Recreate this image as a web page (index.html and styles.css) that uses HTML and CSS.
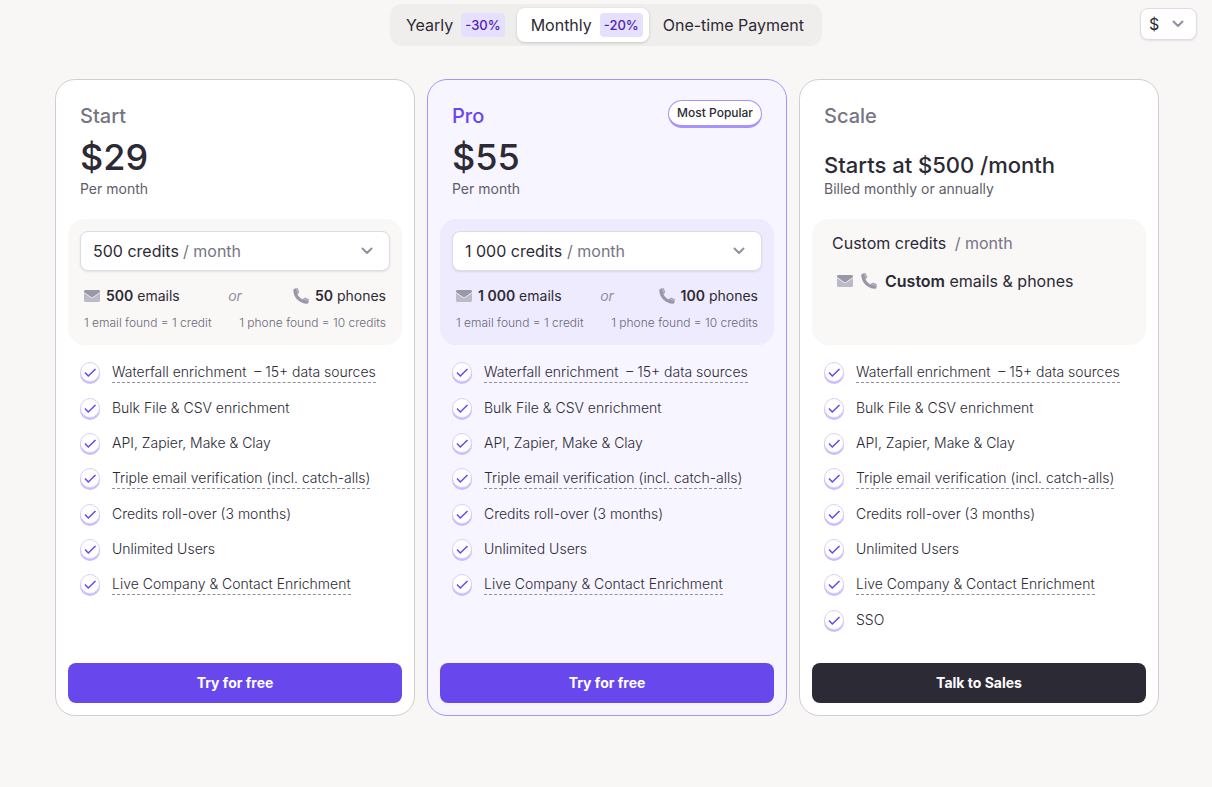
FILE: index.html
```html
<!DOCTYPE html>
<html lang="en">
<head>
<meta charset="utf-8">
<meta name="viewport" content="width=device-width, initial-scale=1">
<title>Pricing</title>
<link rel="stylesheet" href="styles.css">
</head>
<body>
<svg class="sprite" aria-hidden="true">
  <symbol id="chevron" viewBox="0 0 12 8"><path d="M1.500 1.500 6 6l4.500-4.500" fill="none" stroke="currentColor" stroke-width="2" stroke-linecap="round" stroke-linejoin="round"/></symbol>
  <symbol id="mail" viewBox="0 0 16 12"><rect width="16" height="12" rx="1.500" fill="#bcbac6"/><path d="M0 2.200V1.500Q0 0 1.500 0h13Q16 0 16 1.500v.7L8.800 7.200a1.500 1.500 0 0 1-1.600 0Z" fill="#9a98a8"/><path d="m0 2.600 7.200 5a1.500 1.500 0 0 0 1.600 0l7.200-5" fill="none" stroke="#f3f2f5" stroke-width=".9"/></symbol>
  <symbol id="phone" viewBox="0 0 16 16"><path d="M.3 2.200C.2 1.400.8.900 1.500.7L3.700.1c.6-.1 1 .1 1.200.6l1.200 3c.2.500.1.900-.3 1.200L4.400 6.100c1 2.300 2.900 4.300 5.400 5.400l1.200-1.400c.3-.4.8-.5 1.200-.3l3.100 1.300c.5.200.7.600.6 1.100l-.5 2.200c-.2.800-.7 1.300-1.500 1.300C6.600 15.500.5 9.500.3 2.200Z" fill="#9a98a8"/><path d="m3.400.2 2 5.200M10.500 10.600l5.200 2.200" fill="none" stroke="#c9c7d0" stroke-width=".9"/></symbol>
  <symbol id="check" viewBox="0 0 20 23"><circle cx="10" cy="13" r="10" fill="#c9bdfc"/><circle cx="10" cy="11" r="9.500" fill="#fff" stroke="#d9d0fd"/><path d="m5 11.500 3.300 3.500L15.500 8" fill="none" stroke="#6847ed" stroke-width="1.500"/></symbol>
</svg>

<header class="toolbar">
  <div class="tabs" role="group" aria-label="Billing period">
    <button class="tab" type="button">Yearly <span class="discount">-30%</span></button>
    <button class="tab tab-active" type="button" aria-pressed="true">Monthly <span class="discount">-20%</span></button>
    <button class="tab tab-wide" type="button">One-time Payment</button>
  </div>
  <div class="currency">
    <select aria-label="Currency"><option>$</option></select>
    <svg class="chevron"><use href="#chevron"/></svg>
  </div>
</header>

<main class="plans">
  <section class="card">
    <div class="head">
      <h2 class="name">Start</h2>
      <p class="price">$29</p>
      <p class="period">Per month</p>
    </div>
    <div class="credits">
      <div class="picker">
        <select aria-label="Start credits per month"><option>500 credits</option></select>
        <span class="per">/ month</span>
        <svg class="chevron"><use href="#chevron"/></svg>
      </div>
      <div class="amounts">
        <span class="amount"><svg class="mail"><use href="#mail"/></svg><span><b>500</b> emails</span></span>
        <em class="or">or</em>
        <span class="amount amount-end"><svg class="phone"><use href="#phone"/></svg><span><b>50</b> phones</span></span>
      </div>
      <div class="notes"><span>1 email found = 1 credit</span><span>1 phone found = 10 credits</span></div>
    </div>
    <ul class="features">
      <li><svg class="check"><use href="#check"/></svg><span class="hint">Waterfall enrichment&nbsp; – 15+ data sources</span></li>
      <li><svg class="check"><use href="#check"/></svg><span>Bulk File &amp; CSV enrichment</span></li>
      <li><svg class="check"><use href="#check"/></svg><span>API, Zapier, Make &amp; Clay</span></li>
      <li><svg class="check"><use href="#check"/></svg><span class="hint">Triple email verification (incl. catch-alls)</span></li>
      <li><svg class="check"><use href="#check"/></svg><span>Credits roll-over (3 months)</span></li>
      <li><svg class="check"><use href="#check"/></svg><span>Unlimited Users</span></li>
      <li><svg class="check"><use href="#check"/></svg><span class="hint">Live Company &amp; Contact Enrichment</span></li>
    </ul>
    <button class="cta" type="button">Try for free</button>
  </section>

  <section class="card card-pro">
    <div class="head">
      <div class="title-row"><h2 class="name">Pro</h2><span class="badge">Most Popular</span></div>
      <p class="price">$55</p>
      <p class="period">Per month</p>
    </div>
    <div class="credits">
      <div class="picker">
        <select aria-label="Pro credits per month"><option>1 000 credits</option></select>
        <span class="per">/ month</span>
        <svg class="chevron"><use href="#chevron"/></svg>
      </div>
      <div class="amounts">
        <span class="amount"><svg class="mail"><use href="#mail"/></svg><span><b>1 000</b> emails</span></span>
        <em class="or">or</em>
        <span class="amount amount-end"><svg class="phone"><use href="#phone"/></svg><span><b>100</b> phones</span></span>
      </div>
      <div class="notes"><span>1 email found = 1 credit</span><span>1 phone found = 10 credits</span></div>
    </div>
    <ul class="features">
      <li><svg class="check"><use href="#check"/></svg><span class="hint">Waterfall enrichment&nbsp; – 15+ data sources</span></li>
      <li><svg class="check"><use href="#check"/></svg><span>Bulk File &amp; CSV enrichment</span></li>
      <li><svg class="check"><use href="#check"/></svg><span>API, Zapier, Make &amp; Clay</span></li>
      <li><svg class="check"><use href="#check"/></svg><span class="hint">Triple email verification (incl. catch-alls)</span></li>
      <li><svg class="check"><use href="#check"/></svg><span>Credits roll-over (3 months)</span></li>
      <li><svg class="check"><use href="#check"/></svg><span>Unlimited Users</span></li>
      <li><svg class="check"><use href="#check"/></svg><span class="hint">Live Company &amp; Contact Enrichment</span></li>
    </ul>
    <button class="cta" type="button">Try for free</button>
  </section>

  <section class="card">
    <div class="head">
      <h2 class="name">Scale</h2>
      <p class="price price-custom">Starts at $500 /month</p>
      <p class="period">Billed monthly or annually</p>
    </div>
    <div class="credits credits-custom">
      <p class="custom-line">Custom credits <span class="per">/ month</span></p>
      <p class="custom-contacts"><svg class="mail"><use href="#mail"/></svg><svg class="phone"><use href="#phone"/></svg><span><b>Custom</b> emails &amp; phones</span></p>
    </div>
    <ul class="features">
      <li><svg class="check"><use href="#check"/></svg><span class="hint">Waterfall enrichment&nbsp; – 15+ data sources</span></li>
      <li><svg class="check"><use href="#check"/></svg><span>Bulk File &amp; CSV enrichment</span></li>
      <li><svg class="check"><use href="#check"/></svg><span>API, Zapier, Make &amp; Clay</span></li>
      <li><svg class="check"><use href="#check"/></svg><span class="hint">Triple email verification (incl. catch-alls)</span></li>
      <li><svg class="check"><use href="#check"/></svg><span>Credits roll-over (3 months)</span></li>
      <li><svg class="check"><use href="#check"/></svg><span>Unlimited Users</span></li>
      <li><svg class="check"><use href="#check"/></svg><span class="hint">Live Company &amp; Contact Enrichment</span></li>
      <li><svg class="check"><use href="#check"/></svg><span>SSO</span></li>
    </ul>
    <button class="cta cta-dark" type="button">Talk to Sales</button>
  </section>
</main>
</body>
</html>
```
FILE: styles.css
```css
* { box-sizing: border-box; }

body {
  margin: 0;
  background: #f8f7f5;
  color: #2c2a35;
  font-family: Inter, "Noto Sans", sans-serif;
  font-size: 14px;
  line-height: 20px;
}

h2, p, ul { margin: 0; padding: 0; }
button, select { font: inherit; color: inherit; border: 0; background: none; }
svg { display: block; flex: none; }
b { font-weight: 600; }

.sprite { position: absolute; width: 0; height: 0; }
.chevron { width: 12px; height: 8px; color: #92909f; pointer-events: none; }
.mail { width: 16px; height: 12px; }
.phone { width: 16px; height: 16px; }
.check { width: 20px; height: 23px; }

.toolbar {
  display: grid;
  grid-template-columns: 1fr auto 1fr;
  align-items: start;
  padding: 4px 15px 0;
}
.tabs {
  grid-column: 2;
  display: flex;
  padding: 4px;
  border-radius: 12px;
  background: #efeeec;
}
.tab {
  display: flex;
  align-items: center;
  gap: 8px;
  height: 34px;
  padding: 0 12px;
  border-radius: 8px;
  font-size: 16px;
}
.tab-active {
  padding: 0 6px 0 14px;
  background: #fff;
  box-shadow: 0 1px 3px rgba(44, 42, 53, .2);
}
.tab-wide { padding: 0 14px; }
.discount {
  padding: 2px 4px;
  border-radius: 4px;
  background: #e6e0ff;
  color: #4f22b8;
  font-size: 13px;
  font-weight: 500;
}
.currency {
  justify-self: end;
  display: grid;
  align-items: center;
  width: 57px;
  height: 32px;
  margin-top: 4px;
  border: 1px solid #dddce4;
  border-radius: 8px;
  background: #fff;
  box-shadow: 0 1px 2px rgba(44, 42, 53, .1);
}
.currency select {
  grid-area: 1 / 1;
  height: 30px;
  padding: 0 8px;
  appearance: none;
  font-size: 16px;
}
.currency .chevron { grid-area: 1 / 1; justify-self: end; margin-right: 12px; }

.plans {
  display: grid;
  grid-template-columns: repeat(3, 1fr);
  gap: 12px;
  max-width: 1212px;
  margin: 33px auto 0;
  padding: 0 53px 71px 55px;
}
.card {
  display: flex;
  flex-direction: column;
  padding: 20px 12px 12px;
  border: 1px solid #cfced2;
  border-radius: 20px;
  background: #fff;
}
.card-pro { border-color: #a793fb; background: #f7f5ff; }

.head { padding: 0 12px; }
.title-row { display: flex; justify-content: space-between; align-items: start; }
.name {
  padding-top: 2px;
  color: #777583;
  font-size: 20px;
  font-weight: 500;
  line-height: 28px;
}
.card-pro .name { color: #6847ed; }
.badge {
  padding: 2px 8px;
  border: 1px solid #a793fb;
  border-bottom-width: 3px;
  border-radius: 14px;
  background: #fff;
  font-size: 12px;
  font-weight: 500;
}
.price {
  padding-top: 5px;
  font-size: 36px;
  font-weight: 500;
  line-height: 44px;
}
.price-custom { padding-top: 21px; font-size: 22px; line-height: 28px; }
.period { color: #5f5d68; }

.credits {
  display: flex;
  flex-direction: column;
  min-height: 126px;
  margin-top: 20px;
  padding: 12px;
  border-radius: 16px;
  background: #f9f8f7;
}
.card-pro .credits { background: #eeebff; }
.picker {
  display: flex;
  align-items: center;
  gap: 4px;
  height: 40px;
  padding: 0 16px 0 12px;
  border: 1px solid #dddce4;
  border-radius: 8px;
  background: #fff;
  box-shadow: 0 1px 2px rgba(44, 42, 53, .1);
  font-size: 16px;
}
.picker select { height: 38px; padding: 0; appearance: none; }
.picker .chevron { margin-left: auto; }
.per { color: #777583; }
.amounts {
  display: grid;
  grid-template-columns: 1fr auto 1fr;
  align-items: center;
  margin-top: 15px;
  padding: 0 4px;
}
.amount { display: flex; align-items: center; gap: 6px; }
.amount-end { justify-content: end; }
.or { color: #92909f; }
.notes {
  display: flex;
  justify-content: space-between;
  margin-top: 7px;
  padding: 0 4px;
  color: #6b6977;
  font-size: 12px;
  font-weight: 300;
}
.credits-custom { gap: 16px; padding: 13px 20px; font-size: 16px; }
.custom-line { line-height: 22px; }
.custom-line .per { margin-left: 4px; }
.custom-contacts { display: flex; align-items: center; gap: 8px; padding-left: 5px; line-height: 22px; }

.features {
  display: flex;
  flex-direction: column;
  gap: 12px;
  padding: 16px 12px 31px;
  font-weight: 300;
  list-style: none;
}
.features li { display: flex; align-items: start; gap: 12px; line-height: 22px; }
.features .hint {
  margin-bottom: 2px;
  border-bottom: 1px dashed #92909f;
  line-height: 21px;
}

.cta {
  height: 40px;
  margin-top: auto;
  border-radius: 8px;
  background: #6847ed;
  color: #fff;
  font-weight: 700;
}
.cta-dark { background: #2c2a35; }
```
